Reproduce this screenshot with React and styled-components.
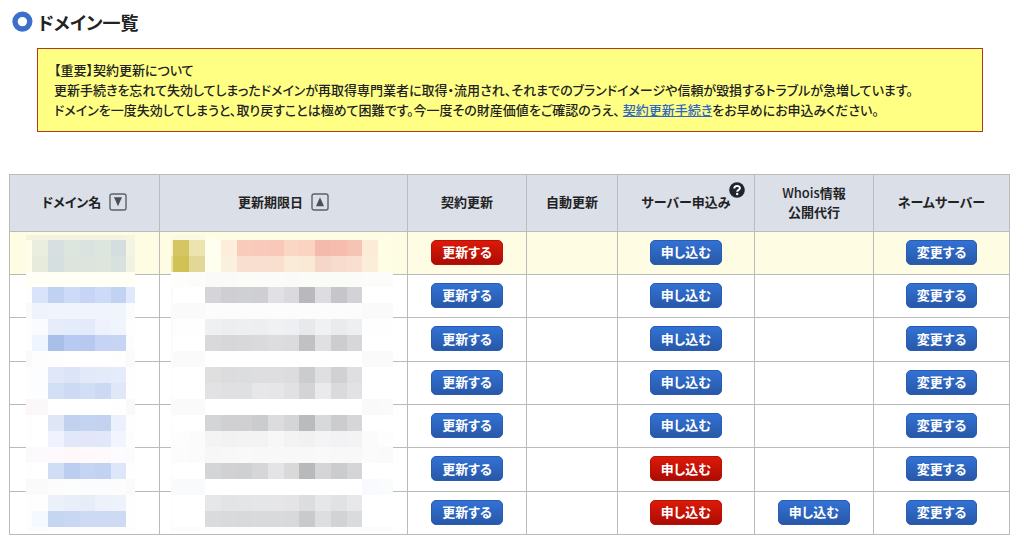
import React from 'react'
import styled, { createGlobalStyle } from 'styled-components'

const GlobalStyle = createGlobalStyle`
    * {
        box-sizing: border-box;
    }
    body {
        margin: 0;
        background-color: #fff;
        color: #222;
        font-family: "Noto Sans CJK JP", sans-serif;
        font-feature-settings: "palt";
        font-size: 13px;
        font-weight: 500;
    }
`
const Page = styled.main`
    padding: 8px 14px 8px 9px;
`
const Title = styled.h1`
    display: flex;
    align-items: center;
    gap: 5px;
    margin: 0 0 12px 2px;
    font-size: 18px;
    line-height: 28px;
    font-weight: 700;
`
const Notice = styled.section`
    margin: 0 27px 42px 28px;
    padding: 11px 16px;
    border: 1px solid #b03a20;
    background-color: #ffff84;
`
const NoticeText = styled.p`
    margin: 0;
    line-height: 20px;
`
const NoticeLink = styled.a`
    color: #2f66c4;
    text-decoration: underline;
`
const DomainTable = styled.table`
    width: 100%;
    table-layout: fixed;
    border-collapse: collapse;
`
const Col = styled.col`
    width: ${props => props.$width};
`
const HeadCell = styled.th`
    height: 57px;
    padding: 0 0 3px;
    border: 1px solid #bbb;
    background-color: #dbdfe8;
    line-height: 19px;
    font-weight: 700;
`
const HeadLine = styled.div`
    display: flex;
    align-items: center;
    justify-content: center;
    gap: 8px;
`
const Latin = styled.span`
    font-weight: 500;
`
const Row = styled.tr`
    height: 43px;
    background-color: ${props => props.$expiring ? '#fffce4' : '#fff'};
    &:nth-child(3n) {
        height: 44px;
    }
`
const Cell = styled.td`
    position: relative;
    padding: 0 0 2px;
    border: 1px solid #bbb;
    text-align: center;
    vertical-align: middle;
`
const ActionButton = styled.button`
    display: block;
    height: 25px;
    margin: 0 auto;
    padding: 0 10px;
    border: 1px solid ${props => props.$urgent ? '#b81208' : '#2a5cb4'};
    border-radius: 5px;
    background: ${props => props.$urgent
        ? 'linear-gradient(#dc1a08, #ac0c04)'
        : 'linear-gradient(#3272d4, #2858a8)'};
    color: #fff;
    font: inherit;
    font-feature-settings: inherit;
    font-weight: 700;
    line-height: 22px;
    cursor: pointer;
`
const SortButton = styled.button`
    display: flex;
    padding: 0;
    border: none;
    background: none;
    cursor: pointer;
`
const HelpLabel = styled.span`
    position: relative;
`
const HelpButton = styled.button`
    position: absolute;
    right: -14px;
    top: -10px;
    display: flex;
    padding: 0;
    border: none;
    background: none;
    cursor: help;
`
const MaskSvg = styled.svg`
    position: absolute;
    top: ${props => props.$top}px;
    left: ${props => props.$left}px;
    z-index: 1;
    display: block;
`

// edges of the mosaic tiles, relative to the top left of each mask
const nameEdges = [0, 6, 22, 38, 54, 69, 85, 100, 109]
const dateEdges = [0, 2, 18, 34, 50, 66, 81, 97, 113, 128, 144, 160, 176, 191, 207, 222]
const rowEdges = [0, 5, 21, 37, 52, 68, 84, 100, 116, 132, 148, 164, 180, 196, 212, 228, 244, 260, 276, 292, 296]

const nameTiles = [
    '#f4f3e0 #f3f3e1 #f3f3e2 #f3f3e2 #f3f3e2 #f3f3e2 #f3f3e2 #f6f5e2',
    '#fefde7 #eaeede #d7dfe0 #dde5df #dae3df #dde5df #d5dedf #f3f5e4',
    '#fefde7 #e6ebdc #d6dfdf #dce4dd #dde4dd #dde5dd #d9e1de #f0f3e2',
    '#fffff3 #fffff5 #fffff6 #fffff6 #fffff6 #fffff6 #fffff6 #fffff4',
    '#fefeff #d9e4fa #c0d1f1 #cddbf8 #c6d5f5 #cddaf8 #c2d2f3 #e0e9fb',
    '#fafafb #eff4fc #f0f4fc #f0f4fc #f0f4fc #f0f4fc #f0f4fb #fafbfd',
    '#fefefe #fafbff #e6ecfa #e4ebfb #e3eafa #edf2fd #f0f4fd #fefeff',
    '#fefefe #eff5ff #a8bfea #b7caf1 #b7c9ee #c5d4f4 #c6d5f4 #fcfdff',
    '#faf9fa #fdfdfd #fefefe #ffffff #ffffff #ffffff #fefefe #fafafa',
    '#fefefe #fcfdff #e0e7f8 #dce5f7 #e2eaf9 #e3ebf9 #e4ebfa #fefefe',
    '#fefefe #fbfdff #d3dff5 #ccdaf3 #d2def6 #ccd9f3 #dfe7f8 #fefefe',
    '#fbf7f9 #fbf8fa #ffffff #ffffff #ffffff #ffffff #fefefe #faf9fa',
    '#fefefe #ffffff #dfe7f7 #c2d2ee #c4d3ef #c2d2ef #eaf0fc #fefefe',
    '#fefefe #ffffff #f0f3fe #e2e7f9 #e2e6f8 #e2e8f9 #f1f5fe #fdfdfd',
    '#fafafa #fcfafd #fef9fc #fff8fb #fff9fb #fefafc #fdfbfe #fbfafc',
    '#fefefe #ffffff #d1ddf5 #bcceef #c4d5f4 #c2d2f1 #dee7f9 #fefefe',
    '#fafafa #fafafa #fcfcfc #fcfdfd #fbfcfd #fbfcfd #fcfcfc #fafafa',
    '#fefefe #fefefe #ecf1f9 #e9eff8 #e6edf8 #ecf1fa #edf2fb #fefefe',
    '#fefefe #f4f8ff #c5d6f1 #c8d8f2 #ccdaf3 #cddaf3 #ccdaf3 #fefefe',
    '#fcfcfc #fcfcfd #fcfdfe #fdfdfd #fdfdfd #fdfdfd #fdfdfe #fcfcfc',
]
const dateTiles = [
    '#fcfbe5 #fbf9e3 #fbf9e4 #fffde7 #fefce5 #fefce5 #fefce5 #fefce5 #fefce5 #fefce5 #fefce5 #fefce5 #fefce5 #fefce6 #fffde7',
    '#faf5d1 #d3c663 #ece4af #fffff0 #fdeedb #f8cbbb #f9cabb #f8c8b8 #fad7c5 #fad4c1 #f4bbad #f6bdaf #f6c4b5 #fcecd7 #fffde3',
    '#eee6b0 #d1c256 #e2d796 #fffff0 #f9f0dd #f8dfcf #f9dfd0 #f8dfce #faebd8 #fae9d5 #f7d6ca #f8dccd #f9dfcf #faeed9 #fefde5',
    '#ffffff #fdfdfc #fcfcfb #fafbf8 #fafaf8 #fbfcf8 #fbfcf9 #fbfcf9 #fafbf8 #fafcf8 #fafcf8 #fafcf8 #fbfbf8 #fcfcfa #fcfcfb',
    '#fafafb #ffffff #ffffff #d5d5d9 #cfcfd3 #cfd0d3 #cfcfd3 #e1e1e5 #dadade #b8b8bd #dddde1 #c6c6ca #d3d3d7 #ffffff #ffffff',
    '#fafafa #fafafa #fafafa #fcfcfc #fcfcfc #fcfcfc #fcfcfc #fcfcfc #fcfcfc #fcfcfc #fcfcfc #fcfcfc #fcfcfc #fafafa #fafafa',
    '#fafafa #fefefe #fefefe #eff0f1 #eceef0 #edeff1 #eceef0 #f0f1f3 #eeeff2 #e7e9eb #f0f1f3 #e9ebed #eeeff1 #fefefe #fefefe',
    '#fbfbfb #ffffff #ffffff #d9d9dc #d7d7da #d8d8da #dadadc #dddddf #dbdbdd #c1c1c4 #e0e0e2 #cdcdd0 #d7d7da #ffffff #ffffff',
    '#fcfcfc #fafafa #fafafa #ffffff #ffffff #ffffff #ffffff #ffffff #ffffff #ffffff #ffffff #ffffff #ffffff #fafafb #fafafb',
    '#fdfdfd #ffffff #ffffff #dfdfe0 #dcdcde #dcddde #dedee0 #dedee0 #dcdcde #cbccce #dfdfe1 #d1d1d4 #dfdfe1 #ffffff #ffffff',
    '#fdfdfd #ffffff #ffffff #e2e2e4 #e0e0e2 #dfe0e2 #e7e7e9 #e6e6e8 #e1e1e3 #d4d4d6 #eaeaec #dadadc #e2e2e4 #ffffff #ffffff',
    '#fbfbfb #fafafa #fafafa #ffffff #ffffff #ffffff #ffffff #ffffff #ffffff #ffffff #ffffff #ffffff #ffffff #f9f9fa #fafafa',
    '#fdfdfd #ffffff #ffffff #d4d5d7 #d0d0d2 #d0d0d3 #cbccce #dcdcde #d4d5d7 #babbbd #d8d9db #cccccf #d6d6d9 #ffffff #ffffff',
    '#fdfdfd #fdfdfd #fbfbfb #f4f4f5 #f2f2f3 #f3f3f4 #f3f3f4 #f7f7f8 #f3f3f4 #f1f1f2 #f4f4f6 #f2f2f4 #f3f3f4 #fbfbfb #fdfdfd',
    '#fbfbfb #fcfcfc #fbfbfb #f7f7f7 #f8f8f8 #f9f9f9 #f8f8f8 #f8f8f8 #f8f8f8 #f8f8f8 #f9f9f9 #f8f8f8 #f8f8f8 #fbfbfb #fafafa',
    '#fdfdfd #ffffff #ffffff #d4d5d7 #d1d1d3 #cfd0d2 #d6d6d8 #e4e4e6 #d9d9da #b8b9bb #d5d5d7 #cbccce #d5d5d7 #ffffff #ffffff',
    '#fafafb #f9fafc #f9fafc #ffffff #ffffff #ffffff #ffffff #ffffff #ffffff #ffffff #ffffff #ffffff #ffffff #f9fafd #fafbfd',
    '#fdfdfd #ffffff #ffffff #e6e7e8 #e3e4e5 #e4e5e6 #e5e6e7 #e6e6e8 #e4e4e6 #dbdddf #e6e7e9 #e1e2e4 #e8e8ea #ffffff #ffffff',
    '#fdfdfd #ffffff #ffffff #dadbdd #d9dadc #d8d9db #d9dadc #d9dadc #d8d9db #c9cacc #dddee0 #d2d3d5 #dadbdd #ffffff #ffffff',
    '#fbfbfb #fcfcfc #fcfcfc #fdfdfd #fdfdfd #fdfdfd #fdfdfd #fdfdfd #fdfdfd #fdfdfd #fdfdfd #fdfdfd #fdfdfd #fcfcfc #fcfcfc',
]

const domains = [
    { id: 1, expiring: true },
    { id: 2 },
    { id: 3 },
    { id: 4 },
    { id: 5 },
    { id: 6, serverUrgent: true },
    { id: 7, serverUrgent: true, whois: true },
]

const Mask = ({ edges, tiles, top, left }) => (
    <MaskSvg
        $top={top}
        $left={left}
        width={edges[edges.length - 1]}
        height={rowEdges[rowEdges.length - 1]}
        shapeRendering="crispEdges"
        aria-hidden="true"
    >
        {tiles.map((line, y) => line.split(' ').map((color, x) => (
            <rect
                key={`${x}-${y}`}
                x={edges[x]}
                y={rowEdges[y]}
                width={edges[x + 1] - edges[x]}
                height={rowEdges[y + 1] - rowEdges[y]}
                fill={color}
            />
        )))}
    </MaskSvg>
)

const RingIcon = () => (
    <svg width="22" height="22" viewBox="0 0 22 22" aria-hidden="true">
        <circle cx="11.4" cy="10.6" r="7.4" fill="#fff" stroke="#3a70cc" strokeWidth="5.4" />
    </svg>
)

const SortIcon = ({ up }) => (
    <svg width="18" height="18" viewBox="0 0 18 18" aria-hidden="true">
        <rect x="1" y="1" width="16" height="16" rx="2" fill="none" stroke="#5c6068" strokeWidth="1.4" />
        <path d={up ? 'M9 4.2 L13 13.2 H5 Z' : 'M5 4.2 H13 L9 13.2 Z'} fill="#4a4e56" />
    </svg>
)

const HelpIcon = () => (
    <svg width="16" height="16" viewBox="0 0 16 16" aria-hidden="true">
        <circle cx="8" cy="8" r="7.8" fill="#20242c" />
        <path d="M5.3 6.4 C5.3 3.2 10.9 3.2 10.9 6.2 C10.9 8 8.2 7.9 8.2 9.8" fill="none" stroke="#fff" strokeWidth="2" />
        <circle cx="8.2" cy="12" r="1.2" fill="#fff" />
    </svg>
)

class App extends React.Component {
    state = {
        nameUp: false,
        dateUp: true
    }

    onClickName = () => {
        this.setState({ nameUp: !this.state.nameUp })
    }

    onClickDate = () => {
        this.setState({ dateUp: !this.state.dateUp })
    }

    render() {
        return (
            <Page>
                <GlobalStyle />
                <Title><RingIcon />ドメイン一覧</Title>
                <Notice>
                    <NoticeText>【重要】契約更新について</NoticeText>
                    <NoticeText>更新手続きを忘れて失効してしまったドメインが再取得専門業者に取得・流用され、それまでのブランドイメージや信頼が毀損するトラブルが急増しています。</NoticeText>
                    <NoticeText>ドメインを一度失効してしまうと、取り戻すことは極めて困難です。今一度その財産価値をご確認のうえ、 <NoticeLink href="#renew">契約更新手続き</NoticeLink>をお早めにお申込みください。</NoticeText>
                </Notice>
                <DomainTable>
                    <colgroup>
                        <Col $width="15%" />
                        <Col $width="24.8%" />
                        <Col $width="11.9%" />
                        <Col $width="9.1%" />
                        <Col $width="13.7%" />
                        <Col $width="11.9%" />
                        <Col $width="13.6%" />
                    </colgroup>
                    <thead>
                        <tr>
                            <HeadCell>
                                <HeadLine>
                                    ドメイン名
                                    <SortButton aria-label="ドメイン名で並べ替え" onClick={this.onClickName}><SortIcon up={this.state.nameUp} /></SortButton>
                                </HeadLine>
                            </HeadCell>
                            <HeadCell>
                                <HeadLine>
                                    更新期限日
                                    <SortButton aria-label="更新期限日で並べ替え" onClick={this.onClickDate}><SortIcon up={this.state.dateUp} /></SortButton>
                                </HeadLine>
                            </HeadCell>
                            <HeadCell>契約更新</HeadCell>
                            <HeadCell>自動更新</HeadCell>
                            <HeadCell>
                                <HelpLabel>
                                    サーバー申込み
                                    <HelpButton aria-label="ヘルプ"><HelpIcon /></HelpButton>
                                </HelpLabel>
                            </HeadCell>
                            <HeadCell><Latin>Whois</Latin>情報<br />公開代行</HeadCell>
                            <HeadCell>ネームサーバー</HeadCell>
                        </tr>
                    </thead>
                    <tbody>
                        {domains.map((domain, index) => (
                            <Row key={domain.id} $expiring={domain.expiring}>
                                <Cell>
                                    {index === 0 && <Mask edges={nameEdges} tiles={nameTiles} top={3} left={16} />}
                                </Cell>
                                <Cell>
                                    {index === 0 && <Mask edges={dateEdges} tiles={dateTiles} top={3} left={11} />}
                                </Cell>
                                <Cell><ActionButton $urgent={domain.expiring}>更新する</ActionButton></Cell>
                                <Cell />
                                <Cell><ActionButton $urgent={domain.serverUrgent}>申し込む</ActionButton></Cell>
                                <Cell>{domain.whois && <ActionButton>申し込む</ActionButton>}</Cell>
                                <Cell><ActionButton>変更する</ActionButton></Cell>
                            </Row>
                        ))}
                    </tbody>
                </DomainTable>
            </Page>
        )
    }
}

export default App
